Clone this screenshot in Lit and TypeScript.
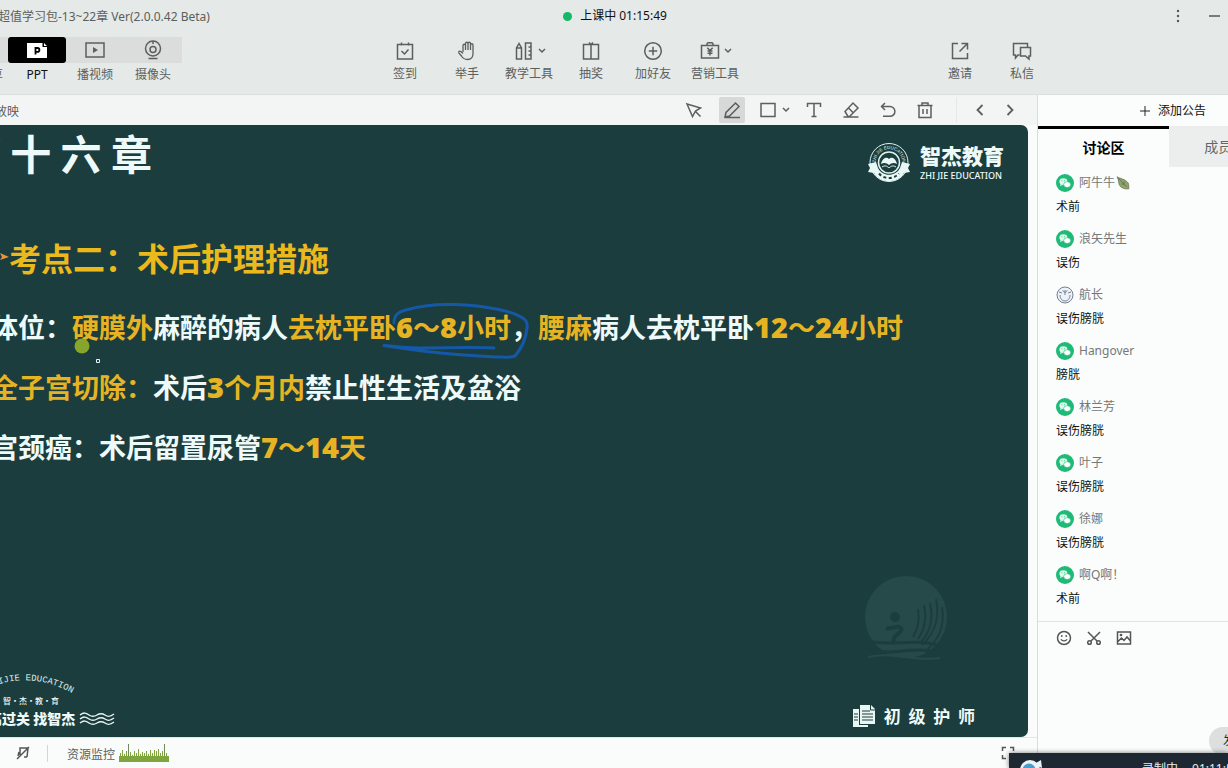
import { LitElement, html, svg, css } from "lit";
import { customElement, property, state } from "lit/decorators.js";

const line = (body: unknown, w = 22, h = 22, vb = `0 0 ${w} ${h}`) => html`
  <svg width=${w} height=${h} viewBox=${vb} fill="none" stroke="currentColor" stroke-width="1.5" aria-hidden="true">${body}</svg>`;

const icons: Record<string, unknown> = {
  sign: line(svg`<path d="M3.5 4.5h15v14.5h-15zM7.5 2.5v3M14.5 2.5v3M7.500 11l3 3 4-4.500"/>`),
  hand: line(svg`<path stroke-width="1.300" d="M7 12V5.500a1.200 1.200 0 0 1 2.500 0V10V3.500a1.200 1.200 0 0 1 2.500 0V10V3.500a1.200 1.200 0 0 1 2.500 0V10V5a1.200 1.200 0 0 1 2.500 0V13.500c0 3.500-2 6-5.500 6c-3 0-4.500-1-6-3.500L2.800 12.800c-.5-1.200.8-2.200 2-1.200L7 13.500"/>`),
  tools: line(svg`<path d="M3.500 19V8l2.500-4.500L8.500 8v11zM3.500 8h5M12.500 3h5.500v16h-5.500zM15.500 7H18M15.500 11H18M15.500 15H18"/>`),
  lottery: line(svg`<path d="M3.500 4.500h15v14.500h-15zM11 4.500v14.500M9 2.500l2 2 2-2"/>`),
  friend: line(svg`<circle cx="11" cy="11" r="8.300"/><path d="M11 6.800v8.400M6.800 11h8.400"/>`),
  market: line(svg`<path d="M2.500 5.500h17V18h-17zM8 5.500V4a1.300 1.300 0 0 1 1.300-1.300h3.400A1.300 1.300 0 0 1 14 4v1.500M8.300 7.800L11 10.500l2.700-2.700M11 10.500V15.500M8.500 11h5M8.500 13.300h5"/>`),
  invite: line(svg`<path d="M9 3.500H3.500v15h15V13M10.500 11.500L18 4M12.500 3.500H18.500V9.500"/>`),
  message: line(svg`<path d="M8.500 15H7l-2.500 3v-3H2.500V3.500h14V7.500M9.500 7.500h10V16h-1.500v3L14.500 16h-5z"/>`),
  video: line(svg`<path d="M2 4h18v14H2z"/><path fill="currentColor" stroke="none" d="M9 8v6l5-3z"/>`),
  camera: line(svg`<circle cx="11" cy="9.500" r="7.500"/><circle cx="11" cy="10.500" r="3"/><path d="M11 2v3M6.500 19.500h9"/>`),
  ppt: html`<svg width="22" height="22" viewBox="0 0 22 22" aria-hidden="true"><path fill="#fff" d="M1 4h15.500v4H21v11H1zM18 4l3 3h-3z"/><path fill="none" stroke="#000" stroke-width="1.800" d="M9.500 15.500V9h2a1.700 1.700 0 0 1 0 3.800h-2"/></svg>`,
  cursor: line(svg`<path d="M2 4l13.500 4-5 3L7.500 16.500zM10.500 11.500l5 5"/>`, 20, 20),
  pen: line(svg`<path d="M3 17l1-4.500L13.500 3l3.500 3.500L7.500 16zM3 17.500h15"/>`, 20, 20),
  square: line(svg`<path d="M3 3.500h14v13H3z"/>`, 20, 20),
  text: line(svg`<path d="M3.500 7V3.500h13V7M10 3.500v13M7.500 16.500h5"/>`, 20, 20),
  eraser: line(svg`<path d="M4 11.500L12 3l5 5-8.500 8.500H7zM7.500 8l5 5M2.500 17h15"/>`, 20, 20),
  undo: line(svg`<path d="M7 3L3.500 6.500 7 10M3.500 6.500h8.500a4.800 4.800 0 0 1 0 9.800H5"/>`, 20, 20),
  trash: line(svg`<path d="M2.500 5.500h15M7 5.500V3h6v2.500M4 5.500V17.500h12V5.500M8 9v5M12 9v5"/>`, 20, 20),
  prev: line(svg`<path stroke-width="1.800" d="M12.500 5l-5 5 5 5"/>`, 20, 20),
  next: line(svg`<path stroke-width="1.800" d="M7.500 5l5 5-5 5"/>`, 20, 20),
  smile: line(svg`<circle cx="8" cy="8" r="6.500"/><path stroke-width="1.300" d="M5 9.200c1.200 2.300 4.800 2.300 6 0M5.800 5v2M10.200 5v2"/>`, 16, 16),
  scissors: line(svg`<path d="M2 2l9 9M14 2L5 11"/><circle cx="3.500" cy="12.500" r="1.800"/><circle cx="12.500" cy="12.500" r="1.800"/>`, 16, 16),
  image: line(svg`<path d="M1.500 2h13v12h-13zM2 11.500L5.500 8l2.500 2.500L11 7l3.500 4"/><circle cx="5" cy="5" r=".6"/>`, 16, 16),
};
const chevron = html`<svg class="chev" width="8" height="6" viewBox="0 0 8 6" fill="none" stroke="currentColor" stroke-width="1.500" aria-hidden="true"><path d="M1 1l3 3 3-3"/></svg>`;

const base = css`
  * { box-sizing: border-box; }
  :host {
    font-family: "Noto Sans", "Noto Sans CJK SC", sans-serif;
    font-size: 12px;
    line-height: 16px;
    color: #5b5f5d;
  }
  button {
    font: inherit; color: inherit; background: none; border: 0; padding: 0; margin: 0;
    display: flex; align-items: center; justify-content: center; white-space: nowrap;
  }
  svg { display: block; flex: none; }
`;

@customElement("app-header")
export class AppHeader extends LitElement {
  static styles = [base, css`
    :host { display: block; background: #e5e9e7; height: 95px; border-bottom: 1px solid #dcdfdd; overflow: hidden; }
    .bar { display: grid; grid-template-columns: 1fr auto 1fr; align-items: center; height: 32px; }
    .title { margin-left: -2px; padding-top: 2px; white-space: nowrap; }
    .live { display: flex; align-items: center; gap: 8px; color: #111; padding-left: 2px; }
    .dot { width: 9px; height: 9px; border-radius: 50%; background: #14b866; }
    .win { display: flex; justify-content: flex-end; gap: 22px; padding-right: 2px; }
    .tools { display: flex; align-items: flex-start; padding-top: 5px; }
    .modes { display: flex; margin-left: -50px; }
    .mode, .tool { flex-direction: column; }
    .mode { width: 58px; gap: 4px; }
    .tile { width: 58px; height: 26px; background: #dadddb; display: grid; place-items: center; }
    .on .tile { background: #000; border-radius: 3px; }
    .on { color: #111; }
    .group { display: flex; padding-top: 3px; }
    .main { margin-left: 192px; }
    .side { margin-left: auto; margin-right: 175px; }
    .tool { width: 62px; gap: 4px; }
    .pic { display: flex; align-items: center; gap: 3px; }
  `];
  @state() mode = "PPT";
  private modes = [["桌面共享", ""], ["PPT", "ppt"], ["播视频", "video"], ["摄像头", "camera"]];
  private main = [["签到", "sign"], ["举手", "hand"], ["教学工具", "tools", "1"], ["抽奖", "lottery"], ["加好友", "friend"], ["营销工具", "market", "1"]];
  private side = [["邀请", "invite"], ["私信", "message"]];
  private tool = (t: string[]) => html`
    <button class="tool"><span class="pic">${icons[t[1]]}${t[2] ? chevron : ""}</span><span>${t[0]}</span></button>`;
  render() {
    return html`
      <div class="bar">
        <div class="title">超值学习包-13~22章 Ver(2.0.0.42 Beta)</div>
        <div class="live"><span class="dot"></span>上课中 01:15:49</div>
        <div class="win">
          <button aria-label="更多"><svg width="12" height="14" viewBox="0 0 12 14" fill="#555"><circle cx="6" cy="2" r="1.200"/><circle cx="6" cy="7" r="1.200"/><circle cx="6" cy="12" r="1.200"/></svg></button>
          <button aria-label="最小化"><svg width="20" height="14" viewBox="0 0 20 14" stroke="#555" stroke-width="1.500"><path d="M3 7h11"/></svg></button>
        </div>
      </div>
      <div class="tools">
        <div class="modes">${this.modes.map(m => html`
          <button class="mode ${this.mode === m[0] ? "on" : ""}" @click=${() => (this.mode = m[0])}>
            <span class="tile">${icons[m[1]] ?? ""}</span><span>${m[0]}</span>
          </button>`)}</div>
        <div class="group main">${this.main.map(this.tool)}</div>
        <div class="group side">${this.side.map(this.tool)}</div>
      </div>`;
  }
}

@customElement("lesson-slide")
export class LessonSlide extends LitElement {
  static styles = [base, css`
    :host {
      display: flex; flex-direction: column; position: relative; overflow: hidden;
      background: #1c3d3d; color: #eefafa; border-radius: 0 7px 7px 0;
      font-family: "Noto Sans CJK SC", sans-serif;
    }
    .head { display: flex; justify-content: space-between; align-items: flex-start; padding-right: 24px; }
    h1 { margin: 0 0 0 -40px; font-size: 41px; line-height: 54px; font-weight: 700; white-space: nowrap; }
    .logo { display: flex; gap: 10px; align-items: center; padding-top: 17px; }
    .logo-name { font-size: 21px; line-height: 26px; font-weight: 900; }
    .logo-en { font-family: "Noto Sans", sans-serif; font-size: 9px; line-height: 16px; font-weight: 500; }
    .body { margin-top: 49px; }
    h2 { margin: 0; display: flex; align-items: center; font-size: 32px; line-height: 48px; color: #ecb91d; white-space: nowrap; }
    p { margin: 0 0 0 -9px; font-size: 27px; line-height: 60px; font-weight: 700; white-space: nowrap; }
    .lines { margin-top: 16px; }
    em { font-style: normal; color: #e6b422; }
    b { font-family: "Noto Sans", sans-serif; font-size: 29px; line-height: 30px; }
    .foot { margin-top: auto; display: flex; justify-content: space-between; align-items: flex-end; padding: 0 53px 8px 0; }
    .brand { margin-left: -40px; }
    .brand svg { overflow: visible; }
    .arc { font-family: "Liberation Mono", monospace; font-size: 9px; fill: #dcecea; }
    .small { font-size: 8px; line-height: 12px; padding-left: 43px; font-weight: 500; white-space: nowrap; }
    .slogan { display: flex; align-items: center; gap: 5px; font-size: 14px; line-height: 22px; font-weight: 900; white-space: nowrap; }
    .grade { display: flex; align-items: center; gap: 9px; font-size: 17px; line-height: 26px; font-weight: 700; white-space: pre; }
    .ink { position: absolute; left: 370px; top: 170px; }
    .pointer { position: absolute; left: 74px; top: 212px; }
    .mark { position: absolute; right: 80px; bottom: 74px; }
  `];
  render() {
    return html`
      <div class="head">
        <h1>第 十 六 章</h1>
        <div class="logo">
          <svg width="42" height="42" viewBox="0 0 42 42" fill="none" stroke="#dff1ef">
            <circle cx="21" cy="20.500" r="19"/><circle cx="21" cy="20.500" r="10.500" stroke-width="1.500"/>
            <path id="ring" d="M7.500 20.500a13.500 13.500 0 0 1 27 0" stroke="none"/>
            <text font-size="4.500" fill="#dff1ef" stroke="none" font-family="Liberation Sans" text-anchor="middle"><textPath href="#ring" startOffset="50%">ZHI JIE EDUCATION</textPath></text>
            <path fill="#e8f8f6" stroke="none" d="M0 22l8-2 2 6c4 9 18 9 22 0l2-6 8 2-2 4 2 4-6 1c-6 11-24 11-30 0l-6-1 2-4z"/>
            <path fill="#e8f8f6" stroke="none" d="M13 22c1-5 5-8 8-5 3-3 7 0 8 5-3-2-6-1-8 1-2-2-5-3-8-1z"/>
            <path d="M14 25c3-2 5-1 7 1 2-2 4-3 7-1"/>
            <path stroke="#1c3d3d" stroke-width="2" stroke-dasharray="3 2.500" d="M11 31.500c5 6 15 6 20 0"/>
          </svg>
          <div><div class="logo-name">智杰教育</div><div class="logo-en">ZHI JIE EDUCATION</div></div>
        </div>
      </div>
      <div class="body">
        <h2><svg width="9" height="12" viewBox="0 0 9 12"><path fill="#e6953c" d="M0 2l9 4-9 3 2-3z"/></svg>考点二：术后护理措施</h2>
        <div class="lines">
          <p>体位：<em>硬膜外</em>麻醉的病人<em>去枕平卧<b>6</b>～<b>8</b>小时</em>，<em>腰麻</em>病人去枕平卧<em><b>12</b>～<b>24</b>小时</em></p>
          <p><em>全子宫切除：</em>术后<em><b>3</b>个月内</em>禁止性生活及盆浴</p>
          <p>宫颈癌：术后留置尿管<em><b>7</b>～<b>14</b>天</em></p>
        </div>
      </div>
      <div class="foot">
        <div class="brand">
          <svg width="130" height="24" viewBox="0 0 130 24"><path id="arc" fill="none" d="M20 21Q66 -3 112 22"/><text class="arc" text-anchor="end"><textPath href="#arc" startOffset="100%">ZHIJIE EDUCATION</textPath></text></svg>
          <div class="small">智·杰·教·育</div>
          <div class="slogan">轻松高过关 找智杰
            <svg width="34" height="12" viewBox="0 0 34 12" fill="none" stroke="#e4f4f2" stroke-width="1.500"><path d="M0 3c4-3 6-2 9 0s5 2 8 0 5-2 8 0 5 2 9-1M0 7c4-3 6-2 9 0s5 2 8 0 5-2 8 0 5 2 9-1M0 11c4-3 6-2 9 0s5 2 8 0 5-2 8 0 5 2 9-1"/></svg>
          </div>
        </div>
        <div class="grade"><svg width="22" height="22" viewBox="0 0 22 22"><path fill="#e8f6f4" d="M0 4h6v16h9v2H0zM7 0h11l4 4v15H7z"/><path stroke="#1c3d3d" d="M9 6h8M9 9h11M9 12h11M9 15h11M1 9h4M1 12h4M1 15h4M17.500 0v5H22" fill="none"/></svg>初  级  护  师</div>
      </div>
      <svg class="ink" width="164" height="70" viewBox="0 0 164 70" fill="none" stroke="#1558a8" stroke-width="3" stroke-linecap="round" stroke-linejoin="round">
        <path d="M24 28C24 20 28 17 36 15C52 10 70 9 85 9.500C98 10 110 11 120 13C132 15 142 17 147 20C156 24 158 27 157 33C156 44 151 54 145 61C140 63 132 62 126 62C106 61 88 60 71 58C50 56 30 53 14 50.500C22 51 32 53 50 53C76 53 100 52 124 53"/>
      </svg>
      <svg class="pointer" width="28" height="28" viewBox="0 0 28 28"><circle cx="8" cy="9" r="7.500" fill="#86a52b"/><path fill="none" stroke="#e8f4f2" d="M22.500 22.500h3v3h-3z"/></svg>
      <svg class="mark" width="84" height="88" viewBox="0 0 84 88" fill="none">
        <circle cx="42" cy="42" r="41" fill="#264a49"/>
        <g stroke="#1c3d3d" stroke-width="2"><path d="M72 24c4 20-1 34-14 46M66 28c4 18 0 30-10 40M60 30c3 14 1 24-6 34M54 34c2 12 0 20-5 28M78 32c3 20-3 32-16 44" /><path d="M4 66c24 6 48-4 76 6M4 74c26 8 44-4 72 4" stroke-width="3"/></g>
        <circle cx="31" cy="42" r="5" fill="#1c3d3d"/><path d="M22 53c6 2 12-4 15 0s-10 8-7 14" stroke="#1c3d3d" stroke-width="4"/>
        <path d="M4 82c24-6 44 5 72 1" stroke="#264a49" stroke-width="2"/>
      </svg>`;
  }
}

@customElement("lesson-stage")
export class LessonStage extends LitElement {
  static styles = [base, css`
    :host { display: flex; flex-direction: column; min-width: 0; background: #fafcfb; }
    .bar { height: 30px; flex: none; display: flex; align-items: center; background: #f3f5f4; padding-right: 14px; }
    .show { margin-left: -5px; margin-right: auto; padding-top: 3px; }
    .draw { display: flex; align-items: center; gap: 11px; }
    .draw button { width: 26px; height: 26px; }
    .draw .wide { width: 34px; gap: 4px; justify-content: flex-end; }
    .draw .sel { background: #d6d9d7; border-radius: 2px; }
    .nav { display: flex; gap: 4px; margin-left: 18px; padding-left: 10px; border-left: 1px solid #e6e9e7; }
    .nav button { width: 26px; height: 26px; }
    lesson-slide { flex: 1; margin-right: 9px; }
    .status { height: 31px; flex: none; display: flex; align-items: center; border-top: 1px solid #e3e6e4; padding: 0 22px 0 14px; }
    .sep { width: 1px; height: 17px; background: #d3d6d4; margin: 0 19px 0 15px; }
    .label { padding-top: 4px; }
    .graph { margin-left: 4px; }
    .full { margin-left: auto; }
  `];
  @state() tool = "pen";
  private tools = [["cursor", "选择"], ["pen", "画笔"], ["square", "形状"], ["text", "文字"], ["eraser", "橡皮"], ["undo", "撤销"], ["trash", "清空"]];
  render() {
    const bars = [5, 8, 4, 7, 5, 6, 3, 7, 5, 9, 4, 6, 5, 7, 4, 8, 5, 8, 7, 9, 5, 7, 6, 5];
    return html`
      <div class="bar">
        <button class="show">放映</button>
        <div class="draw">${this.tools.map(([id, name]) => html`
          <button class="${id === this.tool ? "sel" : ""} ${id === "square" ? "wide" : ""}" aria-label=${name} @click=${() => (this.tool = id)}>${icons[id]}${id === "square" ? chevron : ""}</button>`)}
        </div>
        <div class="nav"><button aria-label="上一页">${icons.prev}</button><button aria-label="下一页">${icons.next}</button></div>
      </div>
      <lesson-slide></lesson-slide>
      <div class="status">
        <button aria-label="静音"><svg width="18" height="18" viewBox="0 0 18 18" fill="none" stroke="#555" stroke-width="1.500"><path d="M6 11V4h8l-1 9M15 3L3 15M5 8l-1 4M10 13h3"/></svg></button>
        <span class="sep"></span>
        <span class="label">资源监控</span>
        <svg class="graph" width="50" height="18" viewBox="0 0 50 18"><path fill="#7fa63c" d="M0 12h50v6H0z"/><path stroke="#7fa63c" d=${bars.map((b, i) => `M${i * 2 + 1.5} 14v-${b}`).join("")}/><path stroke="#6d8a58" d="M9.500 12V0M45.500 12V0"/></svg>
        <button class="full" aria-label="全屏"><svg width="14" height="14" viewBox="0 0 14 14" fill="none" stroke="#555" stroke-width="1.500"><path d="M1.500 5V1.500H5M9 1.500h3.500V5M12.500 9v3.500H9M5 12.500H1.500V9"/></svg></button>
      </div>`;
  }
}

@customElement("chat-panel")
export class ChatPanel extends LitElement {
  static styles = [base, css`
    :host { display: flex; flex-direction: column; border-left: 1px solid #d9dcda; background: #fafdfb; overflow: hidden; color: #111; }
    .notice { height: 31px; flex: none; justify-content: flex-end; gap: 8px; padding-right: 22px; color: #111; }
    .tabs { display: flex; flex: none; height: 41px; }
    .tabs button { width: 131px; flex: none; font-size: 14px; background: #ebeeec; color: #666; }
    .tabs .on { background: none; color: #000; font-weight: 700; border-top: 3px solid #000; }
    ul { list-style: none; margin: 0; padding: 6px 18px 0; height: 454px; }
    li { height: 56px; }
    .who { display: flex; align-items: center; gap: 5px; height: 20px; color: #777; }
    .name { display: flex; align-items: center; }
    .msg { margin-top: 6px; }
    .entry { flex: 1; display: flex; flex-direction: column; border-top: 1px solid #e0e3e1; color: #555; min-height: 0; }
    .icons { display: flex; gap: 14px; padding: 8px 18px; }
    textarea { flex: 1; min-height: 0; border: 0; outline: 0; resize: none; background: none; padding: 0 18px; font: inherit; }
    .send { align-self: flex-end; flex: none; width: 76px; height: 28px; margin: 0 -57px 13px 0; border-radius: 14px; background: #dcdfdd; color: #222; justify-content: flex-start; padding-left: 14px; }
  `];
  @property({ attribute: false }) chat = [
    ["阿牛牛", "术前", "leaf"], ["浪矢先生", "误伤"], ["航长", "误伤膀胱", "cat"], ["Hangover", "膀胱"],
    ["林兰芳", "误伤膀胱"], ["叶子", "误伤膀胱"], ["徐娜", "误伤膀胱"], ["啊Q啊！", "术前"],
  ];
  private avatar(kind?: string) {
    return kind === "cat"
      ? html`<svg width="18" height="18" viewBox="0 0 18 18" fill="none" stroke="#71809a"><circle cx="9" cy="9" r="8" fill="#eef2f6"/><path d="M9 4v5M6.500 4.500l2.500 2 2.500-2M4 9c0 8 10 8 10 0M3 6l3 1M15 6l-3 1"/></svg>`
      : html`<svg width="18" height="18" viewBox="0 0 18 18"><circle cx="9" cy="9" r="9" fill="#1fba78"/><g fill="#dff8eb"><ellipse cx="7.400" cy="7.600" rx="4" ry="3.400"/><path d="M4.500 10l-.3 2.300 2.300-1.300z"/></g><g fill="#fff" stroke="#1fba78" stroke-width=".6"><ellipse cx="11.200" cy="10.600" rx="3.500" ry="2.900"/></g><g fill="#1fba78"><circle cx="6" cy="6.800" r=".5"/><circle cx="8.600" cy="6.800" r=".5"/></g></svg>`;
  }
  private leaf = html`<svg width="16" height="14" viewBox="0 0 16 14"><path fill="#8fa46c" stroke="#65764c" stroke-width=".8" d="M2 .8c3 2 8 2 11 6 1 2 .8 4 .8 6-4 .6-8-.8-9.500-4C3.300 6 4 4 2 .8z"/><path stroke="#5f7148" stroke-width=".8" d="M3 2l9 9M9 5.500v3M6.500 8h3"/></svg>`;
  render() {
    return html`
      <button class="notice"><svg width="10" height="10" viewBox="0 0 10 10" stroke="#222"><path d="M5 0v10M0 5h10"/></svg>添加公告</button>
      <div class="tabs"><button class="on">讨论区</button><button>成员(128)</button></div>
      <ul>${this.chat.map(c => html`
        <li><div class="who">${this.avatar(c[2])}<span class="name">${c[0]}${c[2] === "leaf" ? this.leaf : ""}</span></div><div class="msg">${c[1]}</div></li>`)}</ul>
      <div class="entry">
        <div class="icons"><button aria-label="表情">${icons.smile}</button><button aria-label="截图">${icons.scissors}</button><button aria-label="图片">${icons.image}</button></div>
        <textarea aria-label="输入消息"></textarea>
        <button class="send">发送</button>
      </div>`;
  }
}

@customElement("app-root")
export class AppRoot extends LitElement {
  static styles = [base, css`
    :host { display: flex; flex-direction: column; height: 100vh; position: relative; overflow: hidden; }
    .work { flex: 1; min-height: 0; display: grid; grid-template-columns: minmax(0, 1fr) 191px; grid-template-rows: minmax(0, 1fr); }
    .rec {
      position: absolute; right: 0; bottom: 0; width: 219px; height: 15px; overflow: hidden;
      background: #1e2833; color: #e8ecef; display: flex; align-items: flex-start; padding: 6px 0 0 11px;
      box-shadow: 0 0 5px #0008; white-space: nowrap;
    }
    .rec-text { margin-left: 100px; padding-top: 2px; display: flex; gap: 14px; }
  `];
  render() {
    return html`
      <app-header></app-header>
      <div class="work"><lesson-stage></lesson-stage><chat-panel></chat-panel></div>
      <div class="rec">
        <svg width="22" height="20" viewBox="0 0 22 20"><circle cx="10" cy="11" r="10" fill="#e8f3fa"/><circle cx="9" cy="11" r="6.500" fill="#4d9cc8"/><path fill="#e8f3fa" d="M16 4l5-3 1 8-5-2z"/></svg>
        <div class="rec-text"><span>录制中</span><span>01:11:51</span></div>
      </div>`;
  }
}
